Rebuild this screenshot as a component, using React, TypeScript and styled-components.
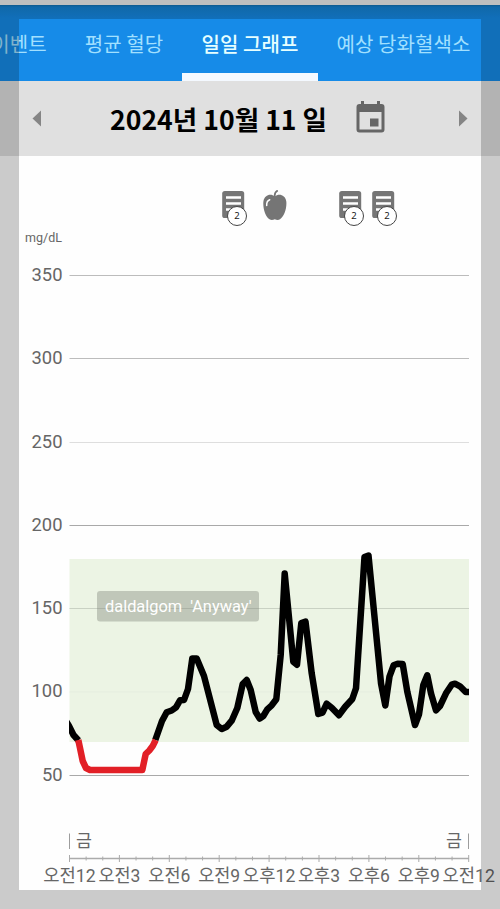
import React from "react";
import styled, { createGlobalStyle } from "styled-components";

const GlobalStyle = createGlobalStyle`
  * { box-sizing: border-box; }
  body { margin: 0; background: #fff; }
`;

const Screen = styled.main`
  position: relative;
  width: 500px;
  height: 909px;
  display: flex;
  flex-direction: column;
  overflow: hidden;
  background: #fefefe;
  font-family: Roboto, "Noto Sans CJK KR", sans-serif;
`;

const StatusStrip = styled.div`
  flex: none;
  height: 5px;
  background: #efefef;
`;

const TabBar = styled.nav`
  flex: none;
  display: flex;
  height: 76px;
  background: linear-gradient(#1270b0 0, #1583d4 2px, #168be8 13px);
`;

const Tab = styled.button<{ $width: number; $active?: boolean; $offset?: number }>`
  flex: none;
  width: ${(p) => p.$width}px;
  height: 76px;
  margin-left: ${(p) => p.$offset ?? 0}px;
  padding: 4px 0 0;
  border: 0;
  border-bottom: 8px solid ${(p) => (p.$active ? "#f4f9ff" : "transparent")};
  background: none;
  color: ${(p) => (p.$active ? "#e6ffff" : "#a2e0ff")};
  font: ${(p) => (p.$active ? 500 : 400)} 20px/70px "Noto Sans CJK KR", sans-serif;
  letter-spacing: 0.1px;
  text-align: center;
  white-space: nowrap;
`;

const DateBar = styled.header`
  flex: none;
  display: flex;
  align-items: center;
  height: 75px;
  padding: 0 32px 0 32px;
  background: #e0e0e0;
`;

const ArrowIcon = styled.svg`
  flex: none;
  width: 9px;
  height: 17px;
  fill: #858585;
`;

const DateTitle = styled.h1`
  flex: none;
  margin: 1px 0 0 69px;
  width: 220px;
  color: #000;
  font: 700 26.6px/40px "Noto Sans CJK KR", sans-serif;
  white-space: nowrap;
`;

const CalendarIcon = styled.svg`
  flex: none;
  width: 29px;
  height: 32px;
  margin: -3px auto 0 26px;
`;

const EventRow = styled.section`
  flex: none;
  display: flex;
  align-items: flex-start;
  height: 70px;
  padding: 34px 0 0 222px;
`;

const EventItem = styled.div<{ $gap?: number }>`
  position: relative;
  flex: none;
  width: 24px;
  height: 32px;
  margin-left: ${(p) => p.$gap ?? 0}px;
`;

const EventIcon = styled.svg`
  display: block;
  width: 24px;
  height: 32px;
`;

const CountBadge = styled.span`
  position: absolute;
  left: 5px;
  top: 16px;
  width: 20px;
  height: 20px;
  border: 1px solid #444;
  border-radius: 50%;
  background: #fff;
  color: #222;
  font: 400 9.5px/18px "Noto Sans", sans-serif;
  text-align: center;
`;

const Chart = styled.svg`
  flex: none;
  display: block;
  width: 500px;
  height: 683px;
`;

const ChartText = styled.text<{ $size: number }>`
  fill: #666;
  font-family: Roboto, "Noto Sans CJK KR", sans-serif;
  font-size: ${(p) => p.$size}px;
`;

const WatermarkText = styled.text`
  fill: #fff;
  font-family: Roboto, sans-serif;
  font-size: 16.4px;
  white-space: pre;
`;

const Frame = styled.div`
  position: absolute;
  inset: 0;
  border: 19px solid rgba(0, 0, 0, 0.2);
  pointer-events: none;
`;

const levels = [
  { value: 350, y: 275.5, color: "#bcbcbc" },
  { value: 300, y: 358.5, color: "#bcbcbc" },
  { value: 250, y: 442.5, color: "#dedede" },
  { value: 200, y: 525.5, color: "#a9a9a9" },
  { value: 150, y: 608.5, color: "#c9d1c3" },
  { value: 100, y: 692, color: "#e5eddf" },
  { value: 50, y: 775.5, color: "#a9a9a9" },
];

const hours = ["오전12", "오전3", "오전6", "오전9", "오후12", "오후3", "오후6", "오후9", "오전12"];

const readings =
  "155.3,740 162,721 166.7,712.3 171.7,710.5 176,707.3 180,700.3 184,700 188,689 192.3,658.5 196.7,658.5 204,676 216.7,725 221.7,729 226.7,726.7 231.7,720.7 237.3,708 242.7,684 246.7,680 250.7,690 255.7,712 259.7,718.5 263.3,716 267.3,709.3 271.7,705.3 276.3,699.3 280.7,655 284.7,573.5 293.3,661.7 297,664.7 301.3,623 305.5,621.7 311.7,673.3 318.3,714 322.5,712.7 326.7,703.7 331.7,707.7 339,715.2 345,707 352.3,699 356,688.3 364.5,557 368.5,555.5 381,683.3 385.3,705.5 389.5,676.5 393.6,665.3 397.7,663.7 402.7,664 407.3,691.7 415,725 419,714.3 423.3,685 427.3,675.3 431,693.3 436,710.3 440,706 446,693.3 451.7,684.7 455,683.7 460,686.3 465.7,692 472,692";

function Note({ gap }: { gap?: number }) {
  return (
    <EventItem $gap={gap}>
      <EventIcon viewBox="0 0 24 32">
        <rect x="0.2" y="1" width="22" height="27" rx="2.6" fill="#757575" />
        <path d="M4 7.5h15M4 13.5h15M4 19.5h15" stroke="#fff" strokeWidth="2.6" />
      </EventIcon>
      <CountBadge>2</CountBadge>
    </EventItem>
  );
}

function Meal({ gap }: { gap?: number }) {
  return (
    <EventItem $gap={gap}>
      <EventIcon viewBox="0 0 24 32">
        <path
          d="M11.8 6.500C8 3.200 1.500 4.500 .4 11.500C-.3 18 2.300 26.500 6.500 29.300c2 1.200 3.800.4 5.300 0c1.500.4 3.200 1.200 5.200 0c4.300-2.800 7-11.300 6.300-17.800C22.300 4.500 15.500 3.200 11.800 6.500Z"
          fill="#757575"
        />
        <path d="M11.800 7C11.300 3.500 12.500 1.500 14.800.5" fill="none" stroke="#757575" strokeWidth="1.7" />
        <path d="M3.700 15.500C3.500 12.500 4.600 10.500 6.700 9.700" fill="none" stroke="#fff" strokeWidth="1.5" strokeLinecap="round" />
      </EventIcon>
    </EventItem>
  );
}

function GlucoseChart() {
  return (
    <Chart viewBox="0 226 500 683">
      <defs>
        <clipPath id="plot">
          <rect x="69" y="240" width="400" height="560" />
        </clipPath>
      </defs>
      <ChartText $size={12.5} x="25" y="242" textLength="37">mg/dL</ChartText>
      <rect x="69.5" y="559" width="399.5" height="183" fill="#ecf4e4" />
      {levels.map((l) => (
        <g key={l.value}>
          <line x1="69.5" x2="469" y1={l.y} y2={l.y} stroke={l.color} />
          <ChartText
            $size={19}
            x="62.5"
            y={l.y + 5.3}
            textAnchor="end"
            textLength={l.value < 100 ? 20.6 : 31}
            lengthAdjust="spacingAndGlyphs"
          >
            {l.value}
          </ChartText>
        </g>
      ))}
      <rect x="97" y="591" width="162" height="30.5" rx="3" fill="#808578" fillOpacity="0.4" />
      <WatermarkText x="105" y="612" xmlSpace="preserve" textLength="146.5">{"daldalgom  'Anyway'"}</WatermarkText>
      <g clipPath="url(#plot)" fill="none" strokeWidth="6.5" strokeLinejoin="round">
        <polyline points="66,721 69,726 73.5,735 78.5,740.5" stroke="#000" />
        <polyline points={readings} stroke="#000" />
        <polyline
          points="78.3,740 80,748 82.7,761 86,768 90,770 142.3,770 145.7,754 149.3,750.5 152.7,746 155.7,740"
          stroke="#e21f26"
        />
      </g>
      <path d="M69.5 833.5V849M468.5 833.5V849" stroke="#9d9d9d" />
      <ChartText $size={17.3} x="76" y="847">금</ChartText>
      <ChartText $size={17.3} x="446" y="847">금</ChartText>
      <path d="M69 858.5H469" stroke="#ababab" strokeWidth="1.3" />
      {Array.from({ length: 25 }, (_, i) => {
        const x = 69.5 + (i * 399.2) / 24;
        const half = i % 3 === 0 ? 3.5 : 2;
        return <line key={i} x1={x} x2={x} y1={858.5 - half} y2={858.5 + half} stroke="#ababab" />;
      })}
      {hours.map((label, i) => (
        <ChartText
          key={i}
          $size={18.7}
          x={69.5 + i * 49.9}
          y="882"
          textAnchor="middle"
          textLength={label.length > 3 ? 52.5 : 42}
          lengthAdjust="spacingAndGlyphs"
        >
          {label}
        </ChartText>
      ))}
    </Chart>
  );
}

export default function App() {
  return (
    <>
      <GlobalStyle />
      <Screen>
        <StatusStrip />
        <TabBar>
          <Tab $width={76} $offset={-19}>이벤트</Tab>
          <Tab $width={116} $offset={9}>평균 혈당</Tab>
          <Tab $width={136} $active>일일 그래프</Tab>
          <Tab $width={171}>예상 당화혈색소</Tab>
        </TabBar>
        <DateBar>
          <ArrowIcon viewBox="0 0 9 17"><path d="M9 .5V16.5L.5 8.5Z" /></ArrowIcon>
          <DateTitle>2024년 10월 11 일</DateTitle>
          <CalendarIcon viewBox="0 0 29 32">
            <path d="M6.5 0v5M22.5 0v5" stroke="#666" strokeWidth="3" />
            <path d="M3.5 3h22a3 3 0 0 1 3 3v22.500a3 3 0 0 1-3 3h-22a3 3 0 0 1-3-3V6a3 3 0 0 1 3-3Z" fill="#666" />
            <path d="M3.5 11h22v17.500h-22Z" fill="#e0e0e0" />
            <path d="M14 17.5h8.500v8H14Z" fill="#666" />
          </CalendarIcon>
          <ArrowIcon viewBox="0 0 9 17"><path d="M0 .5V16.5L8.5 8.5Z" /></ArrowIcon>
        </DateBar>
        <EventRow>
          <Note />
          <Meal gap={17} />
          <Note gap={52} />
          <Note gap={9} />
        </EventRow>
        <GlucoseChart />
        <Frame />
      </Screen>
    </>
  );
}
